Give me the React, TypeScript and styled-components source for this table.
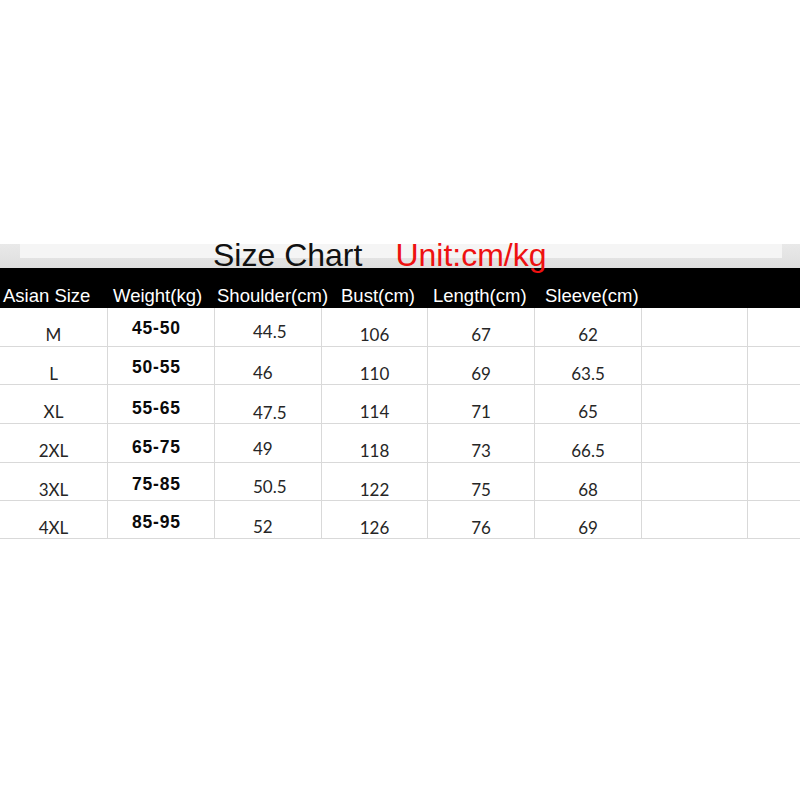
import styled, { createGlobalStyle } from "styled-components";

const GlobalStyle = createGlobalStyle`
  html, body {
    margin: 0;
    padding: 0;
    background: #ffffff;
  }
  body {
    font-family: "Liberation Sans", Arial, sans-serif;
  }
`;

const headers = [
  { label: "Asian Size", width: 110 },
  { label: "Weight(kg)", width: 104 },
  { label: "Shoulder(cm)", width: 124 },
  { label: "Bust(cm)", width: 92 },
  { label: "Length(cm)", width: 112 },
  { label: "Sleeve(cm)", width: 110 },
];

const rows = [
  { size: "M", weight: "45-50", wy: -2, shoulder: "44.5", sy: -2, bust: "106", length: "67", sleeve: "62", h: 39 },
  { size: "L", weight: "50-55", wy: -2, shoulder: "46", sy: 0, bust: "110", length: "69", sleeve: "63.5", h: 38 },
  { size: "XL", weight: "55-65", wy: 1, shoulder: "47.5", sy: 2, bust: "114", length: "71", sleeve: "65", h: 39 },
  { size: "2XL", weight: "65-75", wy: 1, shoulder: "49", sy: -1, bust: "118", length: "73", sleeve: "66.5", h: 39 },
  { size: "3XL", weight: "75-85", wy: -1, shoulder: "50.5", sy: -2, bust: "122", length: "75", sleeve: "68", h: 38 },
  { size: "4XL", weight: "85-95", wy: -1, shoulder: "52", sy: 0, bust: "126", length: "76", sleeve: "69", h: 38 },
];

function App() {
  return (
    <>
      <GlobalStyle />
      <Page>
        <Banner>
          <Panel>
            <Title>Size Chart</Title>
            <Unit>Unit:cm/kg</Unit>
          </Panel>
        </Banner>
        <HeaderRow>
          {headers.map((h) => (
            <HeaderLabel key={h.label} $width={h.width}>
              {h.label}
            </HeaderLabel>
          ))}
        </HeaderRow>
        <Table>
          {rows.map((r) => (
            <Row key={r.size} $height={r.h}>
              <Cell>{r.size}</Cell>
              <WeightCell $shift={r.wy}>{r.weight}</WeightCell>
              <ShoulderCell $shift={r.sy}>{r.shoulder}</ShoulderCell>
              <Cell>{r.bust}</Cell>
              <Cell>{r.length}</Cell>
              <Cell>{r.sleeve}</Cell>
              <Cell />
              <Cell $last />
            </Row>
          ))}
        </Table>
      </Page>
    </>
  );
}

const Page = styled.div`
  width: 800px;
  height: 800px;
  padding-top: 244px;
  box-sizing: border-box;
  background: #ffffff;
`;

const Banner = styled.div`
  height: 24px;
  box-sizing: border-box;
  padding: 0 18px 10px 20px;
  background: linear-gradient(180deg, #e9e9e9 0%, #dedede 100%);
`;

const Panel = styled.div`
  height: 14px;
  box-sizing: border-box;
  padding: 4px 0 0 193px;
  background: #f5f5f5;
  display: flex;
  align-items: flex-start;
  line-height: 15px;
  font-size: 32px;
  overflow: visible;
  white-space: nowrap;
`;

const Title = styled.span`
  color: #111111;
`;

const Unit = styled.span`
  color: #ee1111;
  margin-left: 33px;
`;

const HeaderRow = styled.div`
  height: 40px;
  box-sizing: border-box;
  background: #000000;
  display: flex;
  padding: 18px 0 0 3px;
  line-height: 20px;
  font-size: 18.5px;
  color: #ffffff;
  white-space: nowrap;
`;

const HeaderLabel = styled.div<{ $width: number }>`
  width: ${(p) => p.$width}px;
  flex: none;
`;

const Table = styled.div`
  display: flex;
  flex-direction: column;
`;

const Row = styled.div<{ $height: number }>`
  display: grid;
  grid-template-columns: 108px 107px 107px 106px 107px 107px 106px 1fr;
  height: ${(p) => p.$height}px;
  box-sizing: border-box;
  border-bottom: 1px solid #d9d9d9;
`;

const Cell = styled.div<{ $last?: boolean }>`
  box-sizing: border-box;
  border-right: ${(p) => (p.$last ? "none" : "1px solid #d9d9d9")};
  padding-top: 17px;
  text-align: center;
  font-family: "Lato", "Liberation Sans", sans-serif;
  font-size: 17px;
  line-height: 20px;
  color: #262626;
`;

const WeightCell = styled(Cell)<{ $shift: number }>`
  text-align: left;
  padding-left: 24px;
  padding-top: ${(p) => 12 + p.$shift}px;
  font-family: "Liberation Sans", Arial, sans-serif;
  font-weight: 700;
  font-size: 17.5px;
  letter-spacing: 0.8px;
  color: #0a0a0a;
`;

const ShoulderCell = styled(Cell)<{ $shift: number }>`
  text-align: left;
  padding-left: 38px;
  padding-top: ${(p) => 16 + p.$shift}px;
`;

export default App;
